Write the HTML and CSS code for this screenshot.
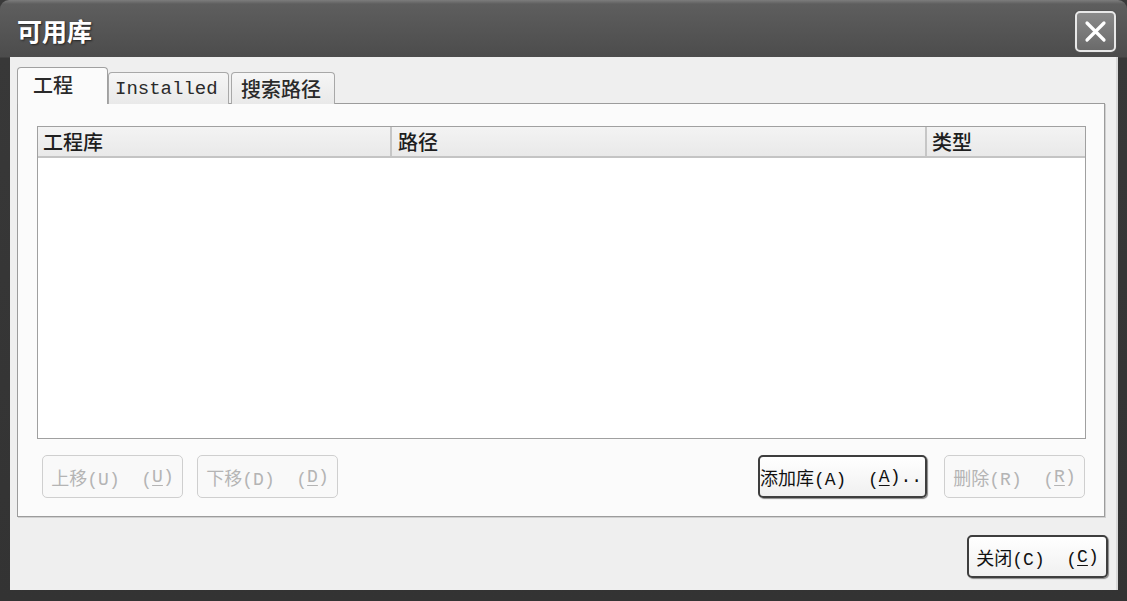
FILE: index.html
```html
<!DOCTYPE html>
<html lang="zh">
<head>
<meta charset="utf-8">
<title>可用库</title>
<link rel="stylesheet" href="styles.css">
</head>
<body>
<div class="window">
  <div class="titlebar">
    <span class="title">可用库</span>
    <button class="close" aria-label="关闭">
      <svg width="27" height="27" viewBox="0 0 27 27"><path d="M5 5 L22 22 M22 5 L5 22" stroke="#fff" stroke-width="3.2" stroke-linecap="round"/></svg>
    </button>
  </div>
  <div class="client">
    <div class="tabs">
      <div class="tab active">工程</div>
      <div class="tab mono">Installed</div>
      <div class="tab">搜索路径</div>
    </div>
    <div class="panel">
      <div class="list">
        <div class="list-head">
          <div class="col c1">工程库</div>
          <div class="col c2">路径</div>
          <div class="col c3">类型</div>
        </div>
        <div class="list-body"></div>
      </div>
      <div class="btnrow">
        <div class="btn disabled">上移(U)&nbsp;&nbsp;(<u>U</u>)</div>
        <div class="btn disabled">下移(D)&nbsp;&nbsp;(<u>D</u>)</div>
        <div class="spacer"></div>
        <div class="btn wide">添加库(A)&nbsp;&nbsp;(<u>A</u>)..</div>
        <div class="btn disabled">删除(R)&nbsp;&nbsp;(<u>R</u>)</div>
      </div>
    </div>
    <div class="footer">
      <div class="btn">关闭(C)&nbsp;&nbsp;(<u>C</u>)</div>
    </div>
  </div>
</div>
</body>
</html>
```
FILE: styles.css
```css
html, body {
  margin: 0;
  padding: 0;
  background: #3a3a3a;
}
body {
  width: 1127px;
  height: 601px;
  overflow: hidden;
  font-family: "Liberation Mono", "Noto Sans CJK SC", monospace;
  font-size: 18px;
  color: #222;
}
.window {
  width: 1127px;
  height: 601px;
  box-sizing: border-box;
  border-radius: 9px 9px 0 0;
  display: flex;
  flex-direction: column;
  padding-bottom: 11px;
  background-image: linear-gradient(#7c7c7c 0, #5e5e5e 4px, #4c4c4c 57px, #383838 58px, #333 100%);
}
.titlebar {
  height: 57px;
  flex: none;
  display: flex;
  align-items: center;
  padding: 0 11px 4px 17px;
  box-sizing: border-box;
}
.title {
  font-family: "Noto Sans CJK SC", sans-serif;
  font-weight: 700;
  font-size: 25px;
  color: #fff;
  text-shadow: 1px 1px 2px #222;
  flex: 1;
  padding-top: 6px;
}
.close {
  width: 41px;
  height: 41px;
  box-sizing: border-box;
  border: 2px solid #e8e8e8;
  border-radius: 5px;
  background: linear-gradient(#8a8a8a, #6a6a6a);
  display: flex;
  align-items: center;
  justify-content: center;
  padding: 0;
  margin-top: 9px;
  box-shadow: 0 0 0 1px #555;
}
.client {
  flex: 1;
  margin: 0 9px 0 10px;
  background: #efefef;
  display: flex;
  flex-direction: column;
  padding: 11px 13px 12px 7px;
  box-sizing: border-box;
  border-right: 2px solid #d8d8d8;
}
.tabs {
  display: flex;
  align-items: flex-end;
  height: 36px;
  position: relative;
  z-index: 1;
  margin-bottom: -1px;
}
.tab {
  font-family: "Noto Sans CJK SC", sans-serif;
  font-size: 20px;
  font-weight: 500;
  height: 32px;
  box-sizing: border-box;
  padding: 0 10px;
  display: flex;
  align-items: center;
  border: 1px solid #a8a8a8;
  border-bottom: none;
  border-radius: 4px 4px 0 0;
  background: linear-gradient(#f6f6f6, #e9e9e9);
  margin-right: 2px;
  color: #2a2a2a;
}
.tab.mono {
  font-family: "Liberation Mono", monospace;
  font-size: 19px;
  font-weight: 400;
  padding: 0 6px;
  width: 121px;
}
.tab.active {
  height: 37px;
  width: 91px;
  padding: 0 0 4px 15px;
  background: #fbfbfb;
  border-color: #a0a0a0;
  margin-right: 0;
}
.tab:nth-child(3) {
  width: 104px;
  padding-left: 9px;
}
.panel {
  width: 1088px;
  height: 414px;
  box-sizing: border-box;
  border: 1px solid #9c9c9c;
  background: #fbfbfb;
  padding: 22px 18px 17px 19px;
  display: flex;
  flex-direction: column;
  box-shadow: 1px 1px 0 #d0d0d0;
}
.list {
  height: 313px;
  border: 1px solid #a0a0a0;
  background: #fff;
  display: flex;
  flex-direction: column;
  box-sizing: border-box;
}
.list-head {
  height: 31px;
  display: flex;
  background: linear-gradient(#f3f3f3, #e9e9e9);
  border-bottom: 2px solid #c4c4c4;
  box-sizing: border-box;
  font-family: "Noto Sans CJK SC", sans-serif;
  font-size: 20px;
  font-weight: 500;
  color: #1e1e1e;
}
.col {
  display: flex;
  align-items: center;
  padding-left: 5px;
  box-sizing: border-box;
}
.c1 { width: 354px; border-right: 2px solid #c6c6c6; }
.c2 { width: 535px; padding-left: 6px; border-right: 2px solid #c6c6c6; }
.c3 { flex: 1; padding-left: 5px; }
.list-body { flex: 1; }
.btnrow {
  display: flex;
  margin-top: 16px;
  padding-left: 5px;
  padding-right: 1px;
}
.spacer { flex: 1; }
.btn {
  width: 141px;
  height: 43px;
  box-sizing: border-box;
  border: 2px solid #3e3e3e;
  border-radius: 5px;
  background: linear-gradient(#ffffff, #f0f0f0);
  display: flex;
  align-items: center;
  justify-content: center;
  font-family: "Liberation Mono", "Noto Sans CJK SC", monospace;
  font-size: 18px;
  color: #111;
  white-space: nowrap;
  box-shadow: 1px 1px 1px #888;
}
.btn.disabled {
  border: 1px solid #cfcfcf;
  color: #b4b4b4;
  background: #f9f9f9;
  box-shadow: none;
  margin-right: 14px;
}
.btn.wide {
  width: 169px;
  margin-right: 17px;
  justify-content: flex-start;
  padding-left: 0;
}
.btn.disabled:last-child { margin-right: 0; }
.btn u { text-underline-offset: 3px; }
.footer {
  flex: 1;
  display: flex;
  justify-content: flex-end;
  align-items: flex-end;
}
.footer .btn {
  width: 141px;
  height: 43px;
  margin-right: -5px;
}
```
